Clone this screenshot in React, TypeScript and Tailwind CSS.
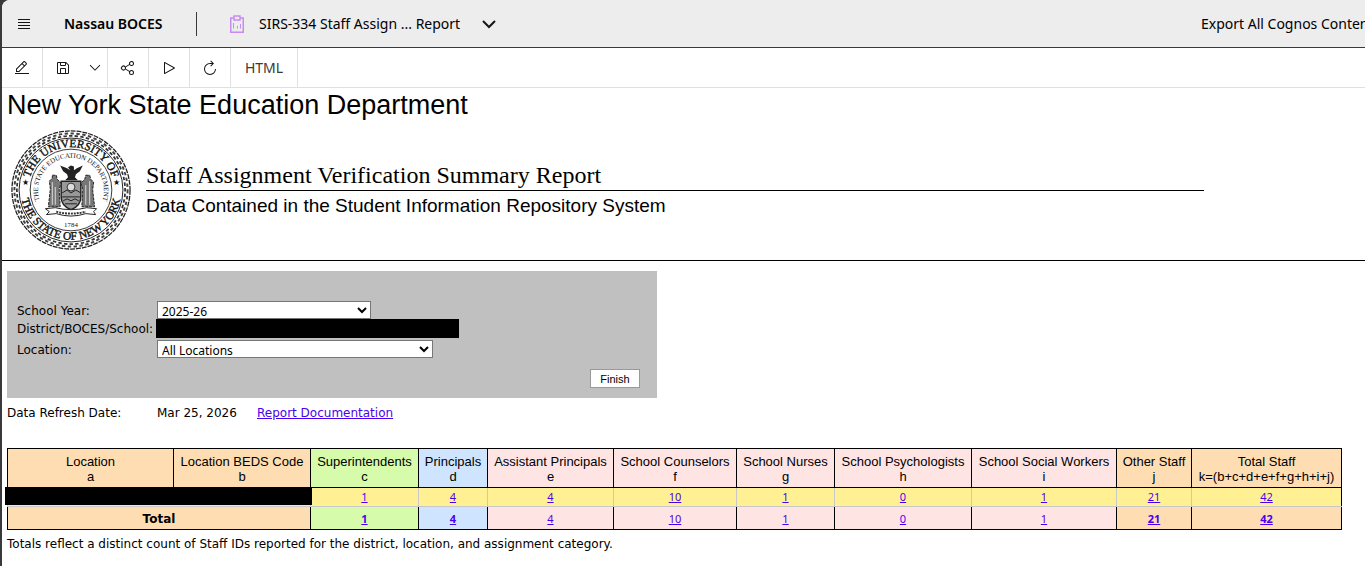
import React from "react";

type Column = {
  name: string;
  letter: string;
  width: string;
  head: string;
  count?: number;
  boldTotal?: boolean;
};

const columns: Column[] = [
  { name: "Location", letter: "a", width: "w-[166px]", head: "bg-[#ffddb3]" },
  { name: "Location BEDS Code", letter: "b", width: "w-[137px]", head: "bg-[#ffddb3]" },
  { name: "Superintendents", letter: "c", width: "w-[108px]", head: "bg-[#d5fbab]", count: 1, boldTotal: true },
  { name: "Principals", letter: "d", width: "w-[69px]", head: "bg-[#cfe5ff]", count: 4, boldTotal: true },
  { name: "Assistant Principals", letter: "e", width: "w-[126px]", head: "bg-[#ffe4e4]", count: 4 },
  { name: "School Counselors", letter: "f", width: "w-[123px]", head: "bg-[#ffe4e4]", count: 10 },
  { name: "School Nurses", letter: "g", width: "w-[98px]", head: "bg-[#ffe4e4]", count: 1 },
  { name: "School Psychologists", letter: "h", width: "w-[137px]", head: "bg-[#ffe4e4]", count: 0 },
  { name: "School Social Workers", letter: "i", width: "w-[145px]", head: "bg-[#ffe4e4]", count: 1 },
  { name: "Other Staff", letter: "j", width: "w-[75px]", head: "bg-[#ffddb3]", count: 21, boldTotal: true },
  { name: "Total Staff", letter: "k=(b+c+d+e+f+g+h+i+j)", width: "w-[150px]", head: "bg-[#ffddb3]", count: 42, boldTotal: true },
];

const counts = columns.slice(2);

const icons = {
  edit: "M2 26h28v2H2zM25.4 9c.8-.8.8-2 0-2.8l-3.6-3.6c-.8-.8-2-.8-2.8 0l-15 15V24h6.4l15-15zm-5-5L24 7.6l-3 3L17.4 7l3-3zM6 22v-3.6l10-10 3.6 3.6-10 10H6z",
  save: "M27.71 9.29l-5-5A1 1 0 0 0 22 4H6a2 2 0 0 0-2 2v20a2 2 0 0 0 2 2h20a2 2 0 0 0 2-2V10a1 1 0 0 0-.29-.71zM12 6h8v4h-8zm8 20h-8v-8h8zm2 0v-8a2 2 0 0 0-2-2h-8a2 2 0 0 0-2 2v8H6V6h4v4a2 2 0 0 0 2 2h8a2 2 0 0 0 2-2V6.41l4 4V26z",
  down: "M16 22L4 10l1.4-1.4L16 19.200 26.600 8.600 28 10z",
  share: "M23 20a5 5 0 0 0-3.89 1.89l-7.31-4.57a4.46 4.46 0 0 0 0-2.64l7.31-4.57A5 5 0 1 0 18 7a4.79 4.79 0 0 0 .2 1.32l-7.31 4.57a5 5 0 1 0 0 6.22l7.31 4.57A4.79 4.79 0 0 0 18 25a5 5 0 1 0 5-5zm0-16a3 3 0 1 1-3 3 3 3 0 0 1 3-3zM7 19a3 3 0 1 1 3-3 3 3 0 0 1-3 3zm16 9a3 3 0 1 1 3-3 3 3 0 0 1-3 3z",
  play: "M7 28a1 1 0 0 1-1-1V5a1 1 0 0 1 1.48-.88l20 11a1 1 0 0 1 0 1.76l-20 11A1 1 0 0 1 7 28zM8 6.69v18.62L24.92 16z",
  restart: "M26 18A10 10 0 1 1 16 8h4.2l-3.6 3.6L18 13l6-6-6-6-1.4 1.4L20.2 6H16a12 12 0 1 0 12 12z",
};

function Icon({ d, className = "w-4 h-4" }: { d: string; className?: string }) {
  return (
    <svg viewBox="0 0 32 32" className={className} fill="currentColor" aria-hidden="true">
      <path d={d} />
    </svg>
  );
}

function Seal() {
  return (
    <svg viewBox="-1 -1 124 124" className="w-[122px] h-[122px] shrink-0" role="img" aria-label="University of the State of New York seal">
      <defs>
        <path id="arc-top" d="M17.5 61a43.5 43.5 0 0 1 87 0" />
        <path id="arc-bottom" d="M10.2 54a51.2 51.2 0 1 0 101.6 0" />
        <path id="arc-inner" d="M30.500 75.500a33.500 33.500 0 1 1 61 0" />
      </defs>
      <g fill="none" stroke="#222">
        <circle cx="61" cy="61" r="60" strokeWidth="1.300" strokeDasharray="5 1" />
        <circle cx="61" cy="61" r="57.500" strokeWidth="2" stroke="#444" strokeDasharray="3.500 2.500" />
        <circle cx="61" cy="61" r="55" strokeWidth="1.800" stroke="#333" strokeDasharray="3.500 2.250" strokeDashoffset="2" />
        <circle cx="61" cy="61" r="52.800" strokeWidth="1" />
        <circle cx="61" cy="61" r="41.500" strokeWidth="0.900" />
      </g>
      <g fill="#111" textAnchor="middle" fontFamily="Liberation Serif, serif">
        <g fontSize="11.500" stroke="#111" strokeWidth="0.400">
          <text>
            <textPath href="#arc-top" startOffset="50%">THE UNIVERSITY OF</textPath>
          </text>
          <text>
            <textPath href="#arc-bottom" startOffset="50%">THE STATE OF NEW YORK</textPath>
          </text>
        </g>
        <text fontSize="7">
          <textPath href="#arc-inner" startOffset="50%">THE STATE EDUCATION DEPARTMENT</textPath>
        </text>
        <text x="61" y="99" fontSize="7">1784</text>
        <text x="14.500" y="56" fontSize="8">★</text>
        <text x="107.500" y="56" fontSize="8">★</text>
      </g>
      {/* eagle on the globe */}
      <path fill="#222" d="M50 36l7 3 3 2-2-3 3-2 3 1 0 4 3-2 6-3-3 6-4 3-1 3 3 3h-13l3-3-1-3-4-3z" />
      {/* shield */}
      <path fill="#999" stroke="#222" strokeWidth="1.500" d="M51 52h20v16q0 9-10 13-10-4-10-13z" />
      <circle cx="61" cy="58" r="4" fill="#ddd" stroke="#333" />
      <path stroke="#222" strokeWidth="1" fill="none" d="M52 64l5-3 4 3 5-3 5 3M52 68h18M53 72l4-2 4 2 4-2 4 2M55 75h12" />
      {/* supporters */}
      <path fill="#777" stroke="#222" strokeWidth="1" strokeDasharray="3 1" d="M42 46h4l1 4 4 4-2 6 1 18H38l2-18-1-8 3-3z" />
      <path fill="#777" stroke="#222" strokeWidth="1" strokeDasharray="3 1" d="M76 46h4l1 4 3 3-1 8 2 17H72l1-18-2-6 4-4z" />
      <path fill="none" stroke="#ddd" strokeWidth="1" d="M42 53v23M45 58v18M76 56v20M80 52v24" />
      {/* motto ribbon */}
      <path fill="#fff" stroke="#222" strokeWidth="1" d="M35 80l10-1q16 4 32 0l10 1-3 3 2 3-10-1q-15 5-30 0l-10 1 3-3z" />
      <path fill="none" stroke="#333" strokeWidth="2" strokeDasharray="2 1" d="M46 83q15 4 30 0" />
    </svg>
  );
}

function App() {
  const toolButton = "flex items-center justify-center border-r border-[#e0e0e0]";
  const select = "h-[18px] pb-0.5 bg-white border border-[#767676] font-['Noto_Sans',sans-serif] leading-4";

  return (
    <div className="min-h-screen bg-[#39393b] pl-0.5 overflow-x-hidden">
      <div className="min-h-screen bg-white rounded-tl-lg overflow-hidden text-black">
        <header className="flex items-center h-12 bg-[#ededed] border-b border-[#39393b] font-['Noto_Sans',sans-serif] text-sm whitespace-nowrap">
          <button aria-label="Open menu" className="ml-3.5 w-4 h-4">
            <svg viewBox="0 0 16 16" className="w-4 h-4" aria-hidden="true">
              <path stroke="#161616" strokeWidth="1" d="M2 3.500h12M2 6.500h12M2 9.500h12M2 12.500h12" />
            </svg>
          </button>
          <span className="ml-8 w-[132px] font-semibold">Nassau BOCES</span>
          <span className="w-px h-6 bg-[#39393b]"></span>
          <svg viewBox="0 0 16 18" className="ml-8 w-4 h-[18px]" fill="none" stroke="#c88af5" aria-hidden="true">
            <path strokeWidth="1.500" d="M5 3H1.750v14.250h12.500V3H11" />
            <path strokeWidth="1.500" d="M5 1h6v4H5z" />
            <path strokeWidth="1" d="M4.500 8v5.500M8.500 11v2.500M11.500 9v4.500" />
          </svg>
          <span className="ml-3.5 w-[212px]">SIRS-334 Staff Assign ... Report</span>
          <button aria-label="Switch report" className="ml-2.5">
            <svg viewBox="0 0 16 16" className="w-4 h-4" fill="none" stroke="#161616" strokeWidth="2" aria-hidden="true">
              <path d="M2 5l6 6 6-6" />
            </svg>
          </button>
          <a href="#export" className="ml-auto w-[164px] overflow-hidden">
            Export All Cognos Content
          </a>
        </header>

        <div className="flex h-10 border-b border-[#e0e0e0] text-[#161616]">
          <button aria-label="Edit" className={`${toolButton} w-[41px]`}><Icon d={icons.edit} /></button>
          <button aria-label="Save" className="flex items-center justify-center w-10"><Icon d={icons.save} /></button>
          <button aria-label="Save options" className={`${toolButton} w-[25px]`}><Icon d={icons.down} className="w-3.5 h-3.5" /></button>
          <button aria-label="Share" className={`${toolButton} w-[41px]`}><Icon d={icons.share} /></button>
          <button aria-label="Run" className={`${toolButton} w-[41px]`}><Icon d={icons.play} /></button>
          <button aria-label="Refresh" className={`${toolButton} w-[41px]`}><Icon d={icons.restart} /></button>
          <button className={`${toolButton} w-[67px] font-['Noto_Sans',sans-serif] text-sm text-[#393939]`}>HTML</button>
        </div>

        <main className="font-['DejaVu_Sans',sans-serif] text-xs">
          <h1 className="pl-[5px] font-['Liberation_Sans',sans-serif] text-[27px] leading-[34px]">New York State Education Department</h1>
          <div className="flex gap-3.5 pl-2 pt-[7px] pb-[9px] border-b border-black">
            <Seal />
            <div className="flex-1 pt-8 mr-[161px]">
              <h2 className="font-['Liberation_Serif',serif] text-2xl leading-[29px] border-b border-black">
                Staff Assignment Verification Summary Report
              </h2>
              <p className="font-['Liberation_Sans',sans-serif] text-[19px] leading-[30px]">
                Data Contained in the Student Information Repository System
              </p>
            </div>
          </div>

          <div className="pl-[5px]">
            <form className="mt-2.5 w-[650px] bg-[#c0c0c0] pl-2.5 pr-[17px] pt-[30px] pb-2.5" onSubmit={(e) => e.preventDefault()}>
              <div className="grid grid-cols-[140px_1fr] leading-4">
                <label htmlFor="year" className="pt-0.5">School Year:</label>
                <select id="year" className={`${select} w-[214px]`}>
                  <option>2025-26</option>
                </select>
                <span className="pt-0.5 whitespace-nowrap">District/BOCES/School:</span>
                <span className="-ml-px w-[303px] h-[19px] bg-black"></span>
                <label htmlFor="location" className="pt-1">Location:</label>
                <select id="location" className={`${select} mt-0.5 w-[276px]`}>
                  <option>All Locations</option>
                </select>
              </div>
              <div className="flex justify-end mt-[11px]">
                <button className="w-[50px] h-[19px] bg-white border border-[#999] font-['Liberation_Sans',sans-serif] text-[11px] leading-4">
                  Finish
                </button>
              </div>
            </form>

            <div className="flex mt-1.5 leading-[18px]">
              <span className="w-[150px]">Data Refresh Date:</span>
              <span className="w-[100px]">Mar 25, 2026</span>
              <a href="#documentation" className="text-[#4b00ee] underline">Report Documentation</a>
            </div>

            <table className="mt-[26px] w-[1335px] table-fixed border-collapse text-center font-['Noto_Sans',sans-serif] text-[11px] leading-4">
              <thead className="font-['Liberation_Sans',sans-serif] text-[13px] leading-[15px]">
                <tr className="h-[39px]">
                  {columns.map((c) => (
                    <th key={c.letter} className={`${c.width} ${c.head} p-0 pt-0.5 font-normal whitespace-nowrap border border-black`}>
                      {c.name}
                      <br />
                      {c.letter}
                    </th>
                  ))}
                </tr>
              </thead>
              <tbody>
                <tr className="h-[19px] bg-[#fff193]">
                  <td colSpan={2} className="relative p-0 border border-[#c8c8c8]">
                    <span className="absolute -left-[3px] -right-[2px] -top-px h-[18px] bg-black"></span>
                  </td>
                  {counts.map((c) => (
                    <td key={c.letter} className="p-0 border border-[#c8c8c8] last:border-x-black">
                      <a href={`#${c.letter.charAt(0)}`} className="text-[#4b00ee] underline">{c.count}</a>
                    </td>
                  ))}
                </tr>
                <tr className="h-[23px]">
                  <th colSpan={2} scope="row" className="p-0 pt-0.5 bg-[#ffddb3] font-['DejaVu_Sans',sans-serif] text-xs font-bold border border-black border-t-[#c8c8c8]">
                    Total
                  </th>
                  {counts.map((c) => (
                    <td key={c.letter} className={`${c.head} p-0 pt-0.5 border border-black border-t-[#c8c8c8]`}>
                      <a
                        href={`#total-${c.letter.charAt(0)}`}
                        className={`text-[#4b00ee] underline ${c.boldTotal ? "font-bold" : ""}`}
                      >
                        {c.count}
                      </a>
                    </td>
                  ))}
                </tr>
              </tbody>
            </table>
            <p className="mt-[5px] leading-[18px]">
              Totals reflect a distinct count of Staff IDs reported for the district, location, and assignment category.
            </p>
          </div>
        </main>
      </div>
    </div>
  );
}

export default App;
